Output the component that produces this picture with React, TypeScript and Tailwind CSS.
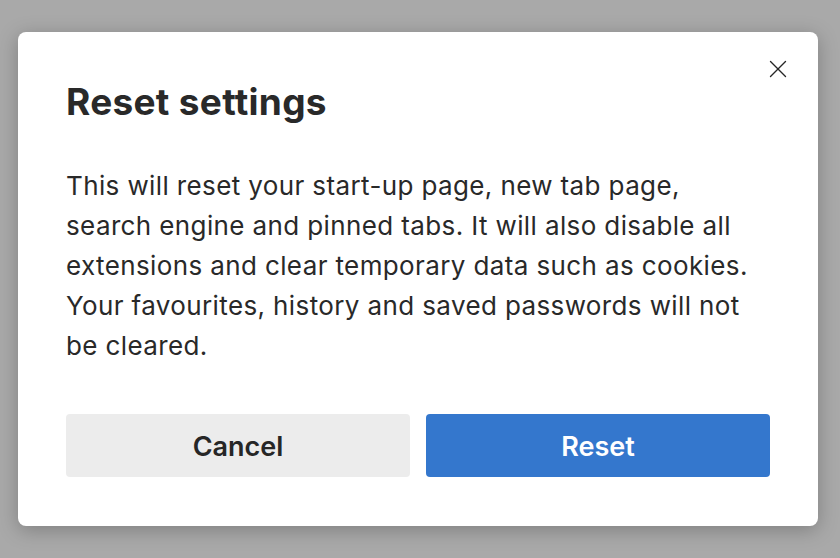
import { X } from "lucide-react";

export default function App() {
  return (
    <div
      className="w-[840px] h-[558px] bg-[#a9a9a9] pt-[32px] pl-[18px]"
      style={{ fontFamily: "Inter, 'Noto Sans', sans-serif" }}
    >
      <div className="relative w-[800px] h-[494px] bg-white rounded-[8px] shadow-[0_4px_20px_rgba(0,0,0,0.25)] px-[48px] pt-[78px] flex flex-col text-[#292929]">
        <button className="absolute right-[25px] top-[22px] w-[30px] h-[30px] text-[#262626]">
          <X size={30} strokeWidth={1.1} />
        </button>
        <h1 className="text-[37px] leading-[40px] font-bold tracking-[0.3px] -mt-[28px] mb-[44px]">Reset settings</h1>
        <p className="w-[692px] text-[26px] leading-[40px] tracking-[0.38px]">
          This will reset your start-up page, new tab page, search engine and pinned tabs. It will also disable all
          extensions and clear temporary data such as cookies. Your favourites, history and saved passwords will not
          be cleared.
        </p>
        <div className="mt-auto mb-[49px] flex gap-[16px]">
          <button className="flex-1 h-[63px] pt-[3px] rounded-[4px] bg-[#ececec] text-[27px] font-semibold text-[#262626]">
            Cancel
          </button>
          <button className="flex-1 h-[63px] pt-[3px] rounded-[4px] bg-[#3477cd] text-[27px] font-semibold text-white">
            Reset
          </button>
        </div>
      </div>
    </div>
  );
}
